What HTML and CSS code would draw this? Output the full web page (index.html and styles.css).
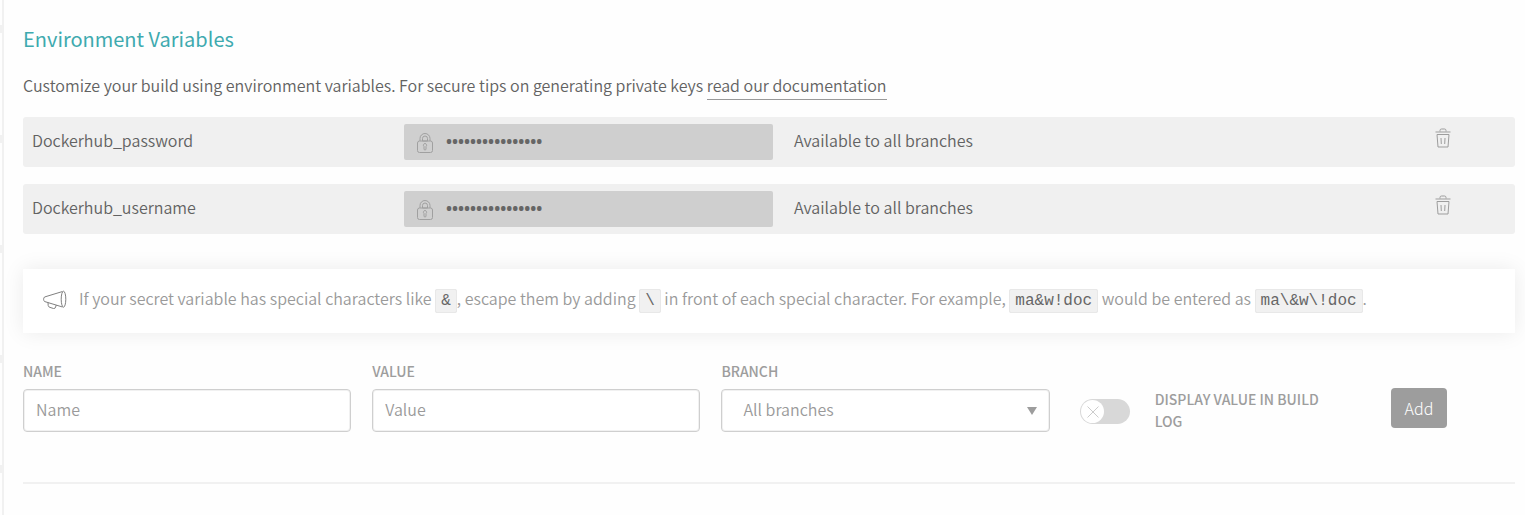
FILE: index.html
```html
<!DOCTYPE html>
<html lang="en">
<head>
<meta charset="utf-8">
<meta name="viewport" content="width=device-width, initial-scale=1">
<title>Environment Variables</title>
<link rel="stylesheet" href="styles.css">
</head>
<body>
<svg class="sprite" aria-hidden="true">
  <symbol id="lock" viewBox="0 0 16 20">
    <path d="M3 8V5.500a5 5 0 0 1 10 0V8M5.500 8V5.500a2.500 2.500 0 0 1 5 0V8ZM2.500 8h11a2 2 0 0 1 2 2v7.500a2 2 0 0 1-2 2h-11a2 2 0 0 1-2-2V10a2 2 0 0 1 2-2Z"/>
    <path d="M8 10.500a1.700 1.700 0 0 1 1 3v2.500a1 1 0 0 1-2 0v-2.500a1.700 1.700 0 0 1 1-3Z"/>
  </symbol>
  <symbol id="trash" viewBox="0 0 16 20">
    <path d="M.5 4h15M5 3.500V2.500a1.500 1.500 0 0 1 1.500-1.500h3A1.500 1.500 0 0 1 11 2.500v1M2 6.500h12l-1 12.500H3ZM6 10l.3 6M10 10l-.3 6"/>
  </symbol>
</svg>
<div class="page">
  <aside class="rail" aria-hidden="true"><i class="tick"></i><i class="tick"></i><i class="tick"></i><i class="tick"></i><i class="tick"></i></aside>
  <main class="content">
    <h2 class="title">Environment Variables</h2>
    <p class="intro">Customize your build using environment variables. For secure tips on generating private keys <a class="doc-link" href="#">read our documentation</a></p>

    <ul class="vars">
      <li class="var">
        <label class="var-name" for="v1">Dockerhub_password</label>
        <div class="secret"><svg class="lock"><use href="#lock"/></svg><input class="secret-input" id="v1" type="password" value="0123456789abcdef" readonly></div>
        <span class="var-scope">Available to all branches</span>
        <button class="delete" type="button" aria-label="Delete Dockerhub_password"><svg class="trash"><use href="#trash"/></svg></button>
      </li>
      <li class="var">
        <label class="var-name" for="v2">Dockerhub_username</label>
        <div class="secret"><svg class="lock"><use href="#lock"/></svg><input class="secret-input" id="v2" type="password" value="0123456789abcdef" readonly></div>
        <span class="var-scope">Available to all branches</span>
        <button class="delete" type="button" aria-label="Delete Dockerhub_username"><svg class="trash"><use href="#trash"/></svg></button>
      </li>
    </ul>

    <div class="notice">
      <svg class="horn" viewBox="0 0 24 20"><path d="M1.500 7 19.500 1.500M1.500 7C.3 8.500.3 10 1.500 11.500L19.500 17M5 12.500 5.200 15.500Q5.400 17 7 17.400L10.500 18.500Q12.300 18.800 12.600 17L13.300 15"/><ellipse cx="20.500" cy="9.200" rx="2.300" ry="8"/></svg>
      <p class="notice-text">If your secret variable has special characters like <code class="code">&amp;</code>, escape them by adding <code class="code">\</code> in front of each special character. For example, <code class="code">ma&amp;w!doc</code> would be entered as <code class="code">ma\&amp;w\!doc</code>.</p>
    </div>

    <form class="form">
      <div class="field"><label class="label" for="name">NAME</label><input class="control" id="name" type="text" placeholder="Name"></div>
      <div class="field"><label class="label" for="value">VALUE</label><input class="control" id="value" type="text" placeholder="Value"></div>
      <div class="field"><label class="label" for="branch">BRANCH</label>
        <div class="select-wrap"><select class="control select" id="branch"><option>All branches</option></select><svg class="caret" viewBox="0 0 10 8"><path d="M0 0h10L5 8Z"/></svg></div>
      </div>
      <div class="actions">
        <div class="switch"><input class="switch-input" id="show" type="checkbox"><svg class="cross" viewBox="0 0 12 12"><path d="M.5.5l11 11M11.500.5l-11 11"/></svg></div>
        <label class="label switch-label" for="show">DISPLAY VALUE IN BUILD LOG</label>
        <button class="add" type="button">Add</button>
      </div>
    </form>
    <hr class="rule">
  </main>
</div>
</body>
</html>
```
FILE: styles.css
```css
* { box-sizing: border-box; }
body {
  margin: 0;
  background: #fefefe;
  color: #626262;
  font: 350 16px/24px "Noto Sans CJK SC DemiLight", "Noto Sans CJK SC", "Noto Sans", sans-serif;
}
.sprite { position: absolute; width: 0; height: 0; }
.page { display: flex; min-height: 100vh; }
.rail {
  flex: none;
  width: 4px;
  padding-top: 25px;
  display: flex;
  flex-direction: column;
  gap: 102px;
  border-right: 2px solid #f1f1f1;
}
.tick { height: 8px; background: #f1f1f1; }
.content { flex: 1; min-width: 0; padding: 24px 10px 30px 19px; }
.title { margin: 0; font: 400 20px/30px "Noto Sans CJK SC", sans-serif; color: #3eaaaf; }
.intro { margin: 19px 0 0; }
.doc-link { padding-bottom: 2px; color: inherit; text-decoration: none; border-bottom: 1px solid #999; }

.vars { list-style: none; margin: 20px 0 0; padding: 0; display: grid; gap: 17px; }
.var {
  display: grid;
  grid-template-columns: 372fr 369fr 597fr 145fr;
  align-items: center;
  height: 50px;
  padding-left: 9px;
  background: #f0f0f0;
  border-radius: 3px;
}
.var-name, .var-scope { padding-bottom: 4px; }
.secret {
  display: flex;
  align-items: center;
  gap: 13px;
  height: 36px;
  padding: 0 13px;
  background: #cfcfcf;
  border-radius: 2px;
}
.lock { flex: none; width: 16px; height: 20px; margin-top: 2px; fill: none; stroke: #a0a0a0; }
.secret-input {
  flex: 1;
  min-width: 0;
  padding: 0 0 2px;
  border: 0;
  background: none;
  color: #666;
  font: 700 16px/24px "Open Sans", sans-serif;
  outline: 0;
}
.var-scope { padding-left: 21px; }
.delete { justify-self: center; margin-bottom: 8px; padding: 0; border: 0; background: none; cursor: pointer; }
.trash { display: block; width: 16px; height: 20px; fill: none; stroke: #9d9d9d; }

.notice {
  display: flex;
  align-items: center;
  gap: 12px;
  min-height: 64px;
  margin-top: 35px;
  padding: 0 20px;
  background: #fff;
  box-shadow: 0 0 20px rgba(0, 0, 0, .08);
  color: #9a9a9a;
}
.horn { flex: none; width: 24px; height: 20px; margin-bottom: 2px; fill: none; stroke: #808080; }
.notice-text { margin: 0; padding-bottom: 3px; }
.code {
  padding: 2px 5px;
  border: 1px solid #e8e8e8;
  border-radius: 2px;
  background: #f1f1f1;
  color: #666;
  font: 400 16px/24px "Liberation Mono", monospace;
}

.form {
  display: grid;
  grid-template-columns: 328fr 328fr 328fr 444fr;
  column-gap: 21px;
  margin-top: 27px;
}
.field { display: flex; flex-direction: column; gap: 7px; }
.label { font-size: 14px; line-height: 22px; font-weight: 500; font-family: "Noto Sans CJK SC", sans-serif; color: #9d9d9d; }
.control {
  width: 100%;
  height: 43px;
  padding: 0 12px 3px;
  border: 1px solid #cfcfcf;
  border-radius: 4px;
  background: #fff;
  color: #9a9a9a;
  font: inherit;
  box-shadow: inset 0 0 0 1px #f1f1f1;
}
.control::placeholder { color: #9a9a9a; opacity: 1; }
.select-wrap { display: grid; align-items: center; }
.select-wrap > * { grid-area: 1 / 1; }
.select { appearance: none; padding: 0 21px 3px; }
.caret { justify-self: end; width: 10px; height: 8px; margin-right: 13px; fill: #9d9d9d; pointer-events: none; }
.actions { display: flex; align-items: flex-start; padding: 28px 68px 0 9px; }
.switch { flex: none; display: grid; align-items: center; margin-top: 11px; }
.switch > * { grid-area: 1 / 1; }
.switch-input {
  appearance: none;
  display: flex;
  width: 50px;
  height: 25px;
  margin: 0;
  padding: 1px;
  border-radius: 13px;
  background: #d8d8d8;
}
.switch-input::before { content: ""; width: 23px; height: 23px; border-radius: 50%; background: #fff; }
.switch-input:checked { justify-content: flex-end; }
.cross { width: 12px; height: 12px; margin-left: 7px; fill: none; stroke: #ccc; pointer-events: none; }
.switch-label { width: 190px; margin-left: 25px; }
.add {
  width: 56px;
  height: 40px;
  margin-left: auto;
  padding: 0 0 1px;
  border: 0;
  border-radius: 4px;
  background: #9d9d9d;
  color: #fff;
  font: inherit;
  font-family: "Noto Sans CJK SC Light", "Noto Sans CJK SC", sans-serif;
  font-weight: 300;
}
.rule { height: 2px; margin: 50px 0 0; border: 0; background: #f1f1f1; }
```
